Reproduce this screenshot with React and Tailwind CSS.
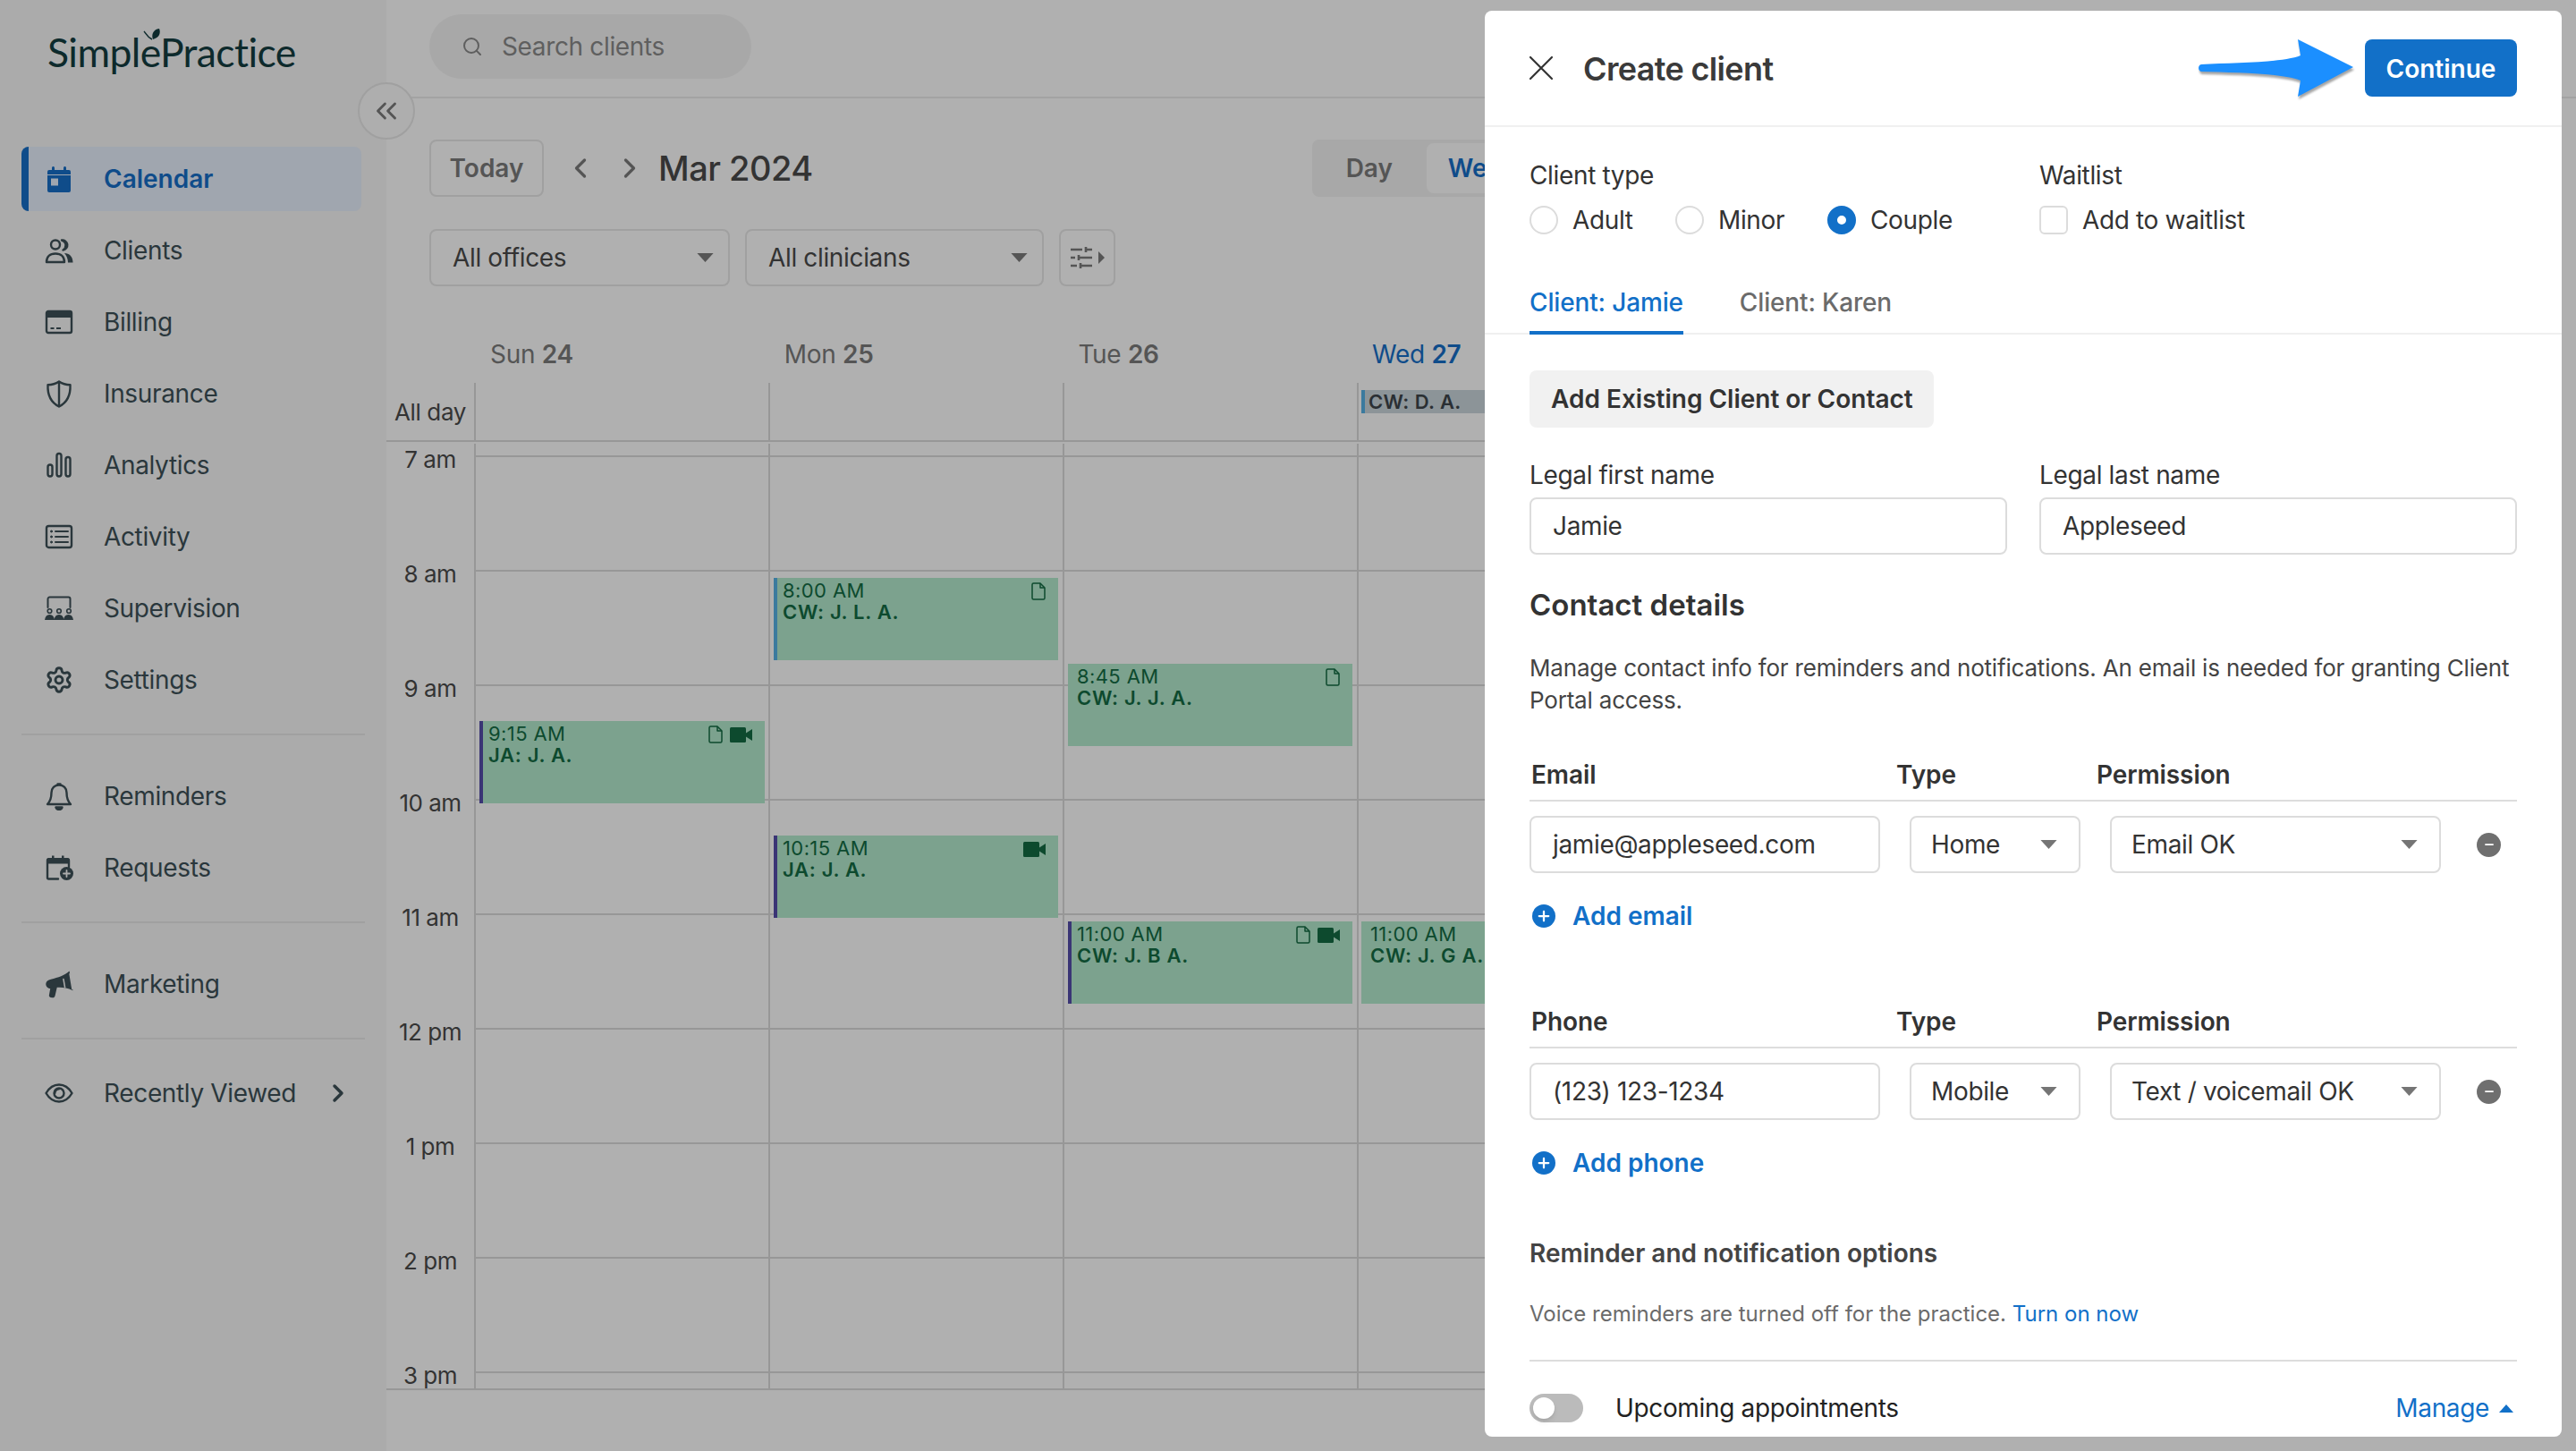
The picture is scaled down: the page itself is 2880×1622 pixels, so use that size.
import React from "react";
import { ChevronsLeft, Search, ChevronLeft, ChevronRight, Settings, Plus, Minus } from "lucide-react";

const Ico = ({ children, className = "" }) => (
  <svg viewBox="0 0 32 32" width="32" height="32" fill="none" stroke="currentColor" strokeWidth="2.4" strokeLinecap="round" strokeLinejoin="round" className={className}>{children}</svg>
);

const icons = {
  calendar: (
    <Ico><path d="M3 8a2 2 0 0 1 2-2h3V3.500a1.500 1.500 0 0 1 3 0V6h10V3.500a1.500 1.500 0 0 1 3 0V6h3a2 2 0 0 1 2 2v21a2 2 0 0 1-2 2H5a2 2 0 0 1-2-2Z" fill="currentColor" stroke="none" /><path d="M3 11.500h26" stroke="#a0a6af" strokeWidth="1" /><rect x="7" y="15.500" width="8" height="8" fill="#a0a6af" stroke="none" /></Ico>
  ),
  clients: (
    <Ico><circle cx="12" cy="9.500" r="5" /><path d="M2 29c0-6 4-9.500 10-9.500s10 3.500 10 9.500Z" /><path d="M19 4.500a5.500 5.500 0 0 1 1.500 11c2-1 3-3 3-5.500s-1.500-4.500-4.500-5.500Z" fill="currentColor" stroke="currentColor" /><path d="M22 19c5.500 0 9.500 4 9.500 10.500h-5.500c0-4.500-1.500-7.500-4-10.500Z" fill="currentColor" stroke="none" /></Ico>
  ),
  billing: (
    <Ico><rect x="2" y="4" width="28" height="24" rx="2" /><rect x="2" y="5" width="28" height="6" fill="currentColor" stroke="none" /><path d="M6.500 23h4M13 23h5" strokeWidth="1.800" strokeLinecap="butt" /></Ico>
  ),
  insurance: (
    <Ico><path d="M16 2.500c4 2.700 8 3.700 12.500 3.800C29 17 25 26 16 30.500 7 26 3 17 3.500 6.300 8 6.200 12 5.200 16 2.500Z" /><path d="M16 3v27" /></Ico>
  ),
  analytics: (
    <Ico><rect x="3.500" y="15.500" width="5" height="13" rx="2.500" /><rect x="13.500" y="3" width="5" height="25.500" rx="2.500" /><rect x="23.500" y="7" width="5" height="21.500" rx="2.500" /></Ico>
  ),
  activity: (
    <Ico><rect x="2" y="4" width="28" height="24" rx="2.500" /><circle cx="7.500" cy="10" r="1" fill="currentColor" strokeWidth="1" /><circle cx="7.500" cy="16" r="1" fill="currentColor" strokeWidth="1" /><circle cx="7.500" cy="22" r="1" fill="currentColor" strokeWidth="1" /><path d="M12 10h14M12 16h14M12 22h14" strokeWidth="2" /></Ico>
  ),
  supervision: (
    <Ico><path d="M3.500 15V5.500a2 2 0 0 1 2-2h21a2 2 0 0 1 2 2V15" strokeWidth="2" /><circle cx="5.500" cy="19" r="2.300" strokeWidth="1.600" /><circle cx="16" cy="19" r="2.300" strokeWidth="1.600" /><circle cx="27" cy="19" r="2.300" strokeWidth="1.600" /><path d="M0 29c.5-4 2.500-6 5.500-6s5 2 5.500 6ZM10.500 29c.5-4 2.500-6 5.500-6s5 2 5.500 6ZM21 29c.5-4 2.500-6 5.500-6s5 2 5.500 6Z" fill="currentColor" stroke="none" /></Ico>
  ),
  reminders: (
    <Ico><path d="M16 3.500c-5 0-8.500 3.500-8.500 8.500 0 7-1.500 10-4.500 13h26c-3-3-4.500-6-4.500-13 0-5-3.500-8.500-8.500-8.500Z" /><path d="M14.500 2.500h3M12.500 28.500h7c-.5 1.500-2 2.500-3.500 2.500s-3-1-3.500-2.500Z" fill="currentColor" /></Ico>
  ),
  requests: (
    <Ico><path d="M27 15V8a1.500 1.500 0 0 0-1.500-1.500h-21A1.500 1.500 0 0 0 3 8v19a1.500 1.500 0 0 0 1.500 1.500H15" /><path d="M2 11.500V7.500A2.500 2.500 0 0 1 4.500 5H8V2.500h2.500V5H19V2.500h2.500V5h4A2.500 2.500 0 0 1 28 7.500v4Z" fill="currentColor" stroke="none" /><circle cx="24.500" cy="22.500" r="7.500" fill="currentColor" stroke="none" /><path d="M24.500 19v7M21 22.500h7" stroke="#ababab" strokeWidth="1.800" /></Ico>
  ),
  marketing: (
    <svg viewBox="1 1 28 28" width="31" height="31" fill="none" strokeLinecap="round" className="text-[#2a373c]"><path d="M25 1.500 28.500 21c-6-3-12-3.500-16-3l-2 8.500c-.3 1.300-1.500 2-2.700 1.800L6 28c-1-.2-1.700-1.200-1.500-2.200l1.200-6.800C3 19 1 16.500 1.300 14c.3-2 2-3.500 5-4.200C14 8 20 6 25 1.500Z" fill="currentColor" /><path d="M19 9.500 20.500 18M25.500 4.500l2.500 15" stroke="#ababab" strokeWidth="1.400" /></svg>
  ),
  eye: (
    <Ico><path d="M1.500 16C5 10 10 6.500 16 6.500S27 10 30.500 16C27 22 22 25.500 16 25.500S5 22 1.500 16Z" /><circle cx="16" cy="16" r="5.500" /><path d="M16 11.500a4.500 4.500 0 0 0-4.500 4.500" strokeWidth="2" /></Ico>
  ),
};

const Item = ({ icon, label, active, children }) => (
  <div className="h-[80px] flex items-center">
    <div className={`flex items-center w-[380px] h-[72px] rounded-lg border-l-[8px] ${active ? "bg-[#a0a6af] border-[#0f4c8a] text-[#0f4c8a] font-semibold tracking-normal" : "border-transparent text-[#2a373c]"}`}>
      <span className="ml-[18px] w-[32px] h-[32px] flex items-center justify-center">{icon}</span>
      <span className="ml-[34px] text-[28px] leading-[36px]">{label}</span>
      {children}
    </div>
  </div>
);

const Rule = () => <div className="h-[2px] w-[384px] bg-[#a0a0a0] mt-[20px]" />;

const Sidebar = () => (
  <aside className="w-[432px] shrink-0 bg-[#ababab] px-[24px]">
    <div className="h-[160px] pt-[32px] pl-[29px]">
      <div className="relative text-[44.500px] leading-[52px] text-[#0d2a2c] [font-family:Lato,sans-serif] tracking-[-0.6px] w-fit">
        SimplePractice
        <svg viewBox="0 0 24 20" width="24" height="20" className="absolute left-[107px] -top-[1px]">
          <path d="M1 4c2 2 3 6 9 9" fill="none" stroke="#0d2a2c" strokeWidth="1.500" />
          <path d="M11 13C9 8 11 2 18 1c2 5 0 10-7 12Z" fill="#0d2a2c" />
        </svg>
      </div>
    </div>
    <Item icon={icons.calendar} label="Calendar" active />
    <Item icon={icons.clients} label="Clients" />
    <Item icon={icons.billing} label="Billing" />
    <Item icon={icons.insurance} label="Insurance" />
    <Item icon={icons.analytics} label="Analytics" />
    <Item icon={icons.activity} label="Activity" />
    <Item icon={icons.supervision} label="Supervision" />
    <Item icon={<Settings size={32} strokeWidth={2.2} />} label="Settings" />
    <Rule />
    <div className="mt-[28px]" />
    <Item icon={icons.reminders} label="Reminders" />
    <Item icon={icons.requests} label="Requests" />
    <Rule />
    <div className="mt-[28px]" />
    <Item icon={icons.marketing} label="Marketing" />
    <Rule />
    <div className="mt-[20px]" />
    <Item icon={icons.eye} label="Recently Viewed">
      <ChevronRight size={32} strokeWidth={2.6} className="ml-[31px]" />
    </Item>
  </aside>
);

const Caret = ({ className = "" }) => (
  <svg viewBox="0 0 20 11" width="19" height="10" className={className}><path d="M0 0h20L10 11Z" fill="currentColor" /></svg>
);

const FilterSelect = ({ label, className }) => (
  <div className={`h-[64px] flex items-center justify-between rounded-lg border-2 border-[#a0a0a0] pl-[24px] pr-[16px] text-[28px] text-[#333] ${className}`}>
    <span>{label}</span><Caret className="text-[#555]" />
  </div>
);

const Doc = () => (
  <svg viewBox="0 0 16 20" width="16" height="20" fill="none" stroke="#0d4a2e" strokeWidth="1.500" strokeLinejoin="round" className="shrink-0"><path d="M2.500 1H10l5 5v11.500a1.500 1.500 0 0 1-1.500 1.500h-11A1.500 1.500 0 0 1 1 17.500v-15A1.500 1.500 0 0 1 2.500 1Z" /><path d="M10 1v5h5" /></svg>
);
const Video = () => (
  <svg viewBox="0 0 25 17" width="25" height="17" className="shrink-0 mt-[2px]"><rect x="0" y="0" width="18" height="17" rx="1.500" fill="#0d4a2e" /><path d="M18 6.500 25 2v13l-7-4.500Z" fill="#0d4a2e" /></svg>
);

const Event = ({ className, bar, time, name, doc, video }) => (
  <div className={`absolute bg-[#7ca28e] overflow-hidden pl-[10px] pr-[14px] pt-[2px] text-[#0d4a2e] ${className}`}>
    {bar && <span className={`absolute left-0 top-0 bottom-0 w-[4px] ${bar}`} />}
    <div className="flex h-[24px] justify-between">
      <span className="text-[22px] leading-[24px] tracking-[0.4px]">{time}</span>
      <span className="flex items-start gap-[8px] mt-[3px]">{doc && <Doc />}{video && <Video />}</span>
    </div>
    <div className="text-[22px] leading-[24px] font-semibold tracking-[0.7px] whitespace-nowrap">{name}</div>
  </div>
);

const hours = ["7 am", "8 am", "9 am", "10 am", "11 am", "12 pm", "1 pm", "2 pm", "3 pm"];

const DayCol = ({ children }) => (
  <div className="relative w-[329px] h-full border-l-2 border-[#979797] overflow-hidden">
    <div className="h-[13px]" />
    {hours.map((h) => <div key={h} className="h-[128px] border-t-2 border-[#979797]" />)}
    {children}
  </div>
);

const Header = ({ d, n, today }) => (
  <div className={`w-[328.700px] pl-[18px] text-[28px] leading-[36px] tracking-[-0.3px] ${today ? "text-[#0f4c8a]" : "text-[#555]"}`}>
    {d} <span className="font-semibold">{n}</span>
  </div>
);

const AllDay = ({ children }) => <div className="relative w-[329px] h-full border-l-2 border-[#979797]">{children}</div>;

const Main = () => (
  <main className="flex-1 min-w-0 bg-[#b0b0b0] overflow-hidden">
    <div className="h-[110px] border-b-2 border-[#a3a3a3] pt-[16px] pl-[48px]">
      <div className="w-[360px] h-[72px] rounded-full bg-[#a8a8a8] flex items-center pl-[36px] text-[#5f5f5f]">
        <Search size={24} strokeWidth={2} />
        <span className="ml-[21px] text-[28px]">Search clients</span>
      </div>
    </div>
    <div className="pl-[48px] pt-[46px] flex items-center h-[110px]">
      <div className="w-[128px] h-[64px] rounded-lg border-2 border-[#a0a0a0] flex items-center justify-center text-[28px] font-semibold tracking-normal text-[#555]">Today</div>
      <ChevronLeft size={36} strokeWidth={2.200} className="ml-[23px] text-[#555]" />
      <ChevronRight size={36} strokeWidth={2.200} className="ml-[19px] text-[#555]" />
      <span className="ml-[14px] text-[38px] font-medium text-[#333] tracking-[-0.5px]">Mar 2024</span>
      <div className="ml-[558px] w-[300px] h-[64px] rounded-lg bg-[#a8a8a8] relative flex items-center text-[28px] font-semibold tracking-normal text-[#555]">
        <span className="w-[128px] text-center">Day</span>
        <span className="h-[56px] flex-1 bg-[#b0b0b0] rounded-lg text-[#0f4c8a] pl-[24px] leading-[56px]">Week</span>
      </div>
    </div>
    <div className="pl-[48px] mt-[36px] flex gap-[17px]">
      <FilterSelect label="All offices" className="w-[336px]" />
      <FilterSelect label="All clinicians" className="w-[334px]" />
      <div className="w-[63px] h-[64px] rounded-lg border-2 border-[#a0a0a0] flex items-center justify-center text-[#555]">
        <svg viewBox="0 0 38 24" width="38" height="24" fill="none" stroke="currentColor" strokeWidth="2.600">
          <path d="M0 3h13M17 3h7M17 0v6M0 12h5M9 12h15M9 9v6M0 21h7M11 21h13M11 18v6" />
          <path d="M31 5l7 7-7 7Z" fill="currentColor" stroke="none" />
        </svg>
      </div>
    </div>
    <div className="mt-[58px] h-[36px] pl-[98px] flex">
      <Header d="Sun" n="24" />
      <Header d="Mon" n="25" />
      <Header d="Tue" n="26" />
      <Header d="Wed" n="27" today />
    </div>
    <div className="mt-[14px] h-[66px] w-[2401px] border-b-2 border-[#979797] flex">
      <div className="w-[98px] h-full flex items-center justify-center text-[26px] text-[#333] pt-[1px]">All day</div>
      <AllDay />
      <AllDay />
      <AllDay />
      <AllDay>
        <div className="absolute left-[3px] top-[8px] w-[320px] h-[26px] bg-[#8c9498] border-l-4 border-[#3b7a9e] pl-[4px] text-[22px] leading-[26px] font-semibold text-[#2a2f33] tracking-[0.4px]">CW: D. A.</div>
      </AllDay>
      <AllDay />
      <AllDay />
      <AllDay />
    </div>
    <div className="mt-[2px] h-[1058px] w-[2401px] border-b-2 border-[#979797] flex">
      <div className="w-[98px] h-full text-[26px] text-[#333] text-center overflow-hidden">
        <div className="h-[14px]" />
        {hours.map((h) => <div key={h} className="h-[128px] leading-[8px] tracking-[-0.5px]">{h}</div>)}
      </div>
      <DayCol>
        <Event className="left-[4px] top-[310px] w-[319px] h-[92px]" bar="bg-[#3a3575]" time="9:15 AM" name="JA: J. A." doc video />
      </DayCol>
      <DayCol>
        <Event className="left-[4px] top-[150px] w-[318px] h-[92px]" bar="bg-[#3b7a9e]" time="8:00 AM" name="CW: J. L. A." doc />
        <Event className="left-[4px] top-[438px] w-[318px] h-[92px]" bar="bg-[#3a3575]" time="10:15 AM" name="JA: J. A." video />
      </DayCol>
      <DayCol>
        <Event className="left-[4px] top-[246px] w-[318px] h-[92px]" time="8:45 AM" name="CW: J. J. A." doc />
        <Event className="left-[4px] top-[534px] w-[318px] h-[92px]" bar="bg-[#3a3575]" time="11:00 AM" name="CW: J. B A." doc video />
      </DayCol>
      <DayCol>
        <Event className="left-[3px] top-[534px] w-[318px] h-[92px]" time="11:00 AM" name="CW: J. G A." />
      </DayCol>
      <DayCol />
      <DayCol />
      <DayCol />
    </div>
  </main>
);

const Radio = ({ label, on, className = "" }) => (
  <div className={`flex items-center ${className}`}>
    <span className={`w-[32px] h-[32px] rounded-full bg-white ${on ? "border-[11px] border-[#1270c8]" : "border-2 border-[#dcdcdc]"}`} />
    <span className="ml-[16px] text-[28px] leading-[36px] text-[#333]">{label}</span>
  </div>
);

const Field = ({ value, className = "" }) => (
  <div className={`h-[64px] rounded-lg border-2 border-[#dcdcdc] flex items-center pl-[24px] text-[28px] text-[#333] ${className}`}>{value}</div>
);

const Sel = ({ value, className = "" }) => (
  <div className={`h-[64px] rounded-lg border-2 border-[#dcdcdc] flex items-center justify-between pl-[22px] pr-[24px] text-[28px] text-[#333] ${className}`}>
    <span>{value}</span><Caret className="text-[#757575]" />
  </div>
);

const MinusBtn = () => (
  <span className="ml-[40px] w-[27px] h-[27px] rounded-full bg-[#6f6f6f] flex items-center justify-center text-white"><Minus size={14} strokeWidth={3} /></span>
);

const ContactBlock = ({ title, value, type, perm, add }) => (
  <div>
    <div className="flex h-[36px] pb-[10px] border-b-2 border-[#dddddd] box-content text-[28px] leading-[36px] font-semibold tracking-[-0.1px] text-[#333] pl-[2px]">
      <span className="w-[408px]">{title}</span>
      <span className="w-[224px]">Type</span>
      <span>Permission</span>
    </div>
    <div className="mt-[16px] flex items-center">
      <Field value={value} className="w-[392px]" />
      <Sel value={type} className="ml-[33px] w-[191px]" />
      <Sel value={perm} className="ml-[33px] w-[370px]" />
      <MinusBtn />
    </div>
    <div className="mt-[30px] h-[36px] flex items-center pl-[3px] text-[#1270c8] text-[28px] font-semibold tracking-normal">
      <span className="w-[26px] h-[26px] rounded-full bg-[#1270c8] flex items-center justify-center text-white"><Plus size={18} strokeWidth={3} /></span>
      <span className="ml-[19px]">{add}</span>
    </div>
  </div>
);

const Modal = () => (
  <section className="absolute left-[1660px] top-[12px] w-[1204px] h-[1594px] rounded-lg bg-white overflow-hidden">
    <header className="h-[130px] border-b-2 border-[#f0f0f0] flex items-center pl-[50px] pr-[50px]">
      <svg viewBox="0 0 28 28" width="28" height="28" fill="none" stroke="#333" strokeWidth="2.200" strokeLinecap="round" className="-ml-[1px] shrink-0"><path d="M2 2l24 24M26 2 2 26" /></svg>
      <h1 className="ml-[33px] mt-[2px] text-[36px] font-semibold text-[#3a3a3a] tracking-[-0.65px]">Create client</h1>
      <svg viewBox="0 0 173 64" width="173" height="64" className="ml-auto drop-shadow-[1px_3px_1px_rgba(0,0,0,0.35)]">
        <path d="M3 28C40 26 95 26 114 18L111 0 173 31 111 64 114 46C95 38 40 37 3 36-1 35-1 29 3 28Z" fill="#1b8fff" />
      </svg>
      <button className="ml-[13px] w-[170px] h-[64px] rounded-lg bg-[#1270c8] text-white text-[28px] font-semibold tracking-normal pt-[1px]">Continue</button>
    </header>
    <div className="px-[50px] pt-[36px] flex">
      <div className="w-[570px]">
        <div className="text-[28px] leading-[36px] text-[#333]">Client type</div>
        <div className="mt-[16px] flex h-[32px]">
          <Radio label="Adult" className="w-[163px]" />
          <Radio label="Minor" className="w-[170px]" />
          <Radio label="Couple" on />
        </div>
      </div>
      <div>
        <div className="text-[28px] leading-[36px] text-[#333]">Waitlist</div>
        <div className="mt-[16px] flex items-center h-[32px]">
          <span className="w-[32px] h-[32px] rounded-md border-2 border-[#dcdcdc]" />
          <span className="ml-[16px] text-[28px] text-[#333]">Add to waitlist</span>
        </div>
      </div>
    </div>
    <div className="mt-[58px] h-[54px] px-[50px] flex gap-[63px] border-b-2 border-[#f0f0f0] text-[28px] leading-[36px] tracking-[-0.15px]">
      <span className="h-[54px] pb-[14px] border-b-4 border-[#1270c8] text-[#1270c8] font-medium">Client: Jamie</span>
      <span className="text-[#6b6b6b] font-medium">Client: Karen</span>
    </div>
    <div className="px-[50px]">
      <div className="mt-[40px] w-[452px] h-[64px] rounded-lg bg-[#f1f1f1] flex items-center pl-[24px] text-[28px] font-semibold tracking-normal text-[#333]">Add Existing Client or Contact</div>
      <div className="mt-[35px] flex gap-[36px]">
        <div className="w-[534px]">
          <div className="text-[28px] leading-[36px] text-[#333]">Legal first name</div>
          <Field value="Jamie" className="mt-[7px]" />
        </div>
        <div className="w-[534px]">
          <div className="text-[28px] leading-[36px] text-[#333]">Legal last name</div>
          <Field value="Appleseed" className="mt-[7px]" />
        </div>
      </div>
      <h2 className="mt-[36px] text-[33px] leading-[40px] font-semibold tracking-normal text-[#333]">Contact details</h2>
      <p className="mt-[33px] text-[26px] leading-[36px] tracking-[-0.19px] text-[#444]">Manage contact info for reminders and notifications. An email is needed for granting Client Portal access.</p>
      <div className="mt-[47px]">
        <ContactBlock title="Email" value="jamie@appleseed.com" type="Home" perm="Email OK" add="Add email" />
      </div>
      <div className="mt-[82px]">
        <ContactBlock title="Phone" value="(123) 123-1234" type="Mobile" perm="Text / voicemail OK" add="Add phone" />
      </div>
      <div className="mt-[65px] text-[28px] leading-[36px] font-semibold tracking-normal text-[#444]">Reminder and notification options</div>
      <p className="mt-[32px] text-[24px] leading-[36px] tracking-normal text-[#6b6b6b]">Voice reminders are turned off for the practice. <span className="text-[#1270c8]">Turn on now</span></p>
      <div className="mt-[33px] border-t-2 border-[#dddddd]" />
      <div className="mt-[36px] flex items-center h-[32px]">
        <span className="w-[60px] h-[32px] rounded-full bg-[#bbbbbb] flex items-center pl-[4px]"><span className="w-[24px] h-[24px] rounded-full bg-white shadow-md" /></span>
        <span className="ml-[36px] text-[28px] text-[#222]">Upcoming appointments</span>
        <span className="ml-auto text-[28px] text-[#1270c8]">Manage</span>
        <svg viewBox="0 0 16 9" width="16" height="9" className="ml-[11px] mr-[4px] text-[#1270c8]"><path d="M8 0l8 9H0Z" fill="currentColor" /></svg>
      </div>
    </div>
  </section>
);

export default function App() {
  return (
    <div className="relative flex w-[2880px] h-[1622px] overflow-hidden bg-[#b0b0b0] tracking-[-0.35px] [font-family:Inter,sans-serif]">
      <Sidebar />
      <Main />
      <button className="absolute left-[400px] top-[92px] w-[64px] h-[64px] rounded-full border-2 border-[#a0a0a0] bg-[#aeaeae] flex items-center justify-center text-[#555]">
        <ChevronsLeft size={38} strokeWidth={1.800} />
      </button>
      <Modal />
    </div>
  );
}
